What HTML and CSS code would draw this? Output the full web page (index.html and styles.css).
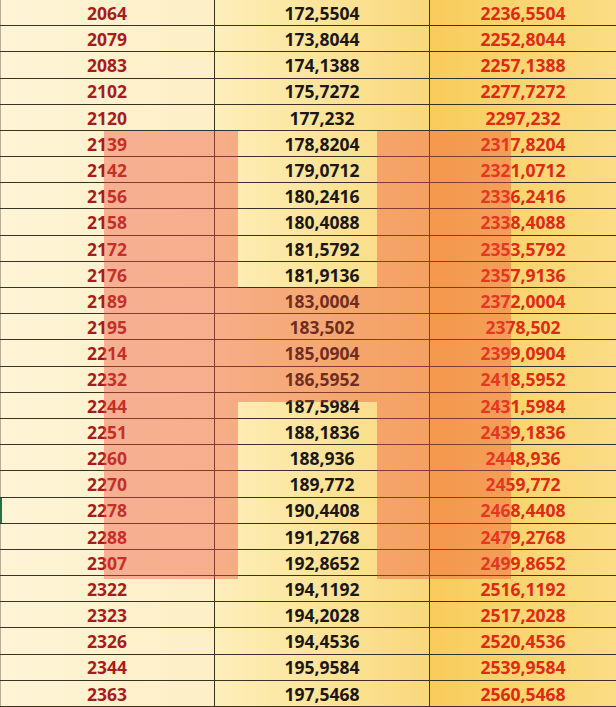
FILE: index.html
```html
<!DOCTYPE html>
<html lang="tr">
<head>
<meta charset="utf-8">
<title>Tablo</title>
<link rel="stylesheet" href="styles.css">
</head>
<body>
<div class="sheet">
  <div class="rows">
    <div class="row"><div class="c c1">2064</div><div class="c c2">172,5504</div><div class="c c3">2236,5504</div></div>
    <div class="row"><div class="c c1">2079</div><div class="c c2">173,8044</div><div class="c c3">2252,8044</div></div>
    <div class="row"><div class="c c1">2083</div><div class="c c2">174,1388</div><div class="c c3">2257,1388</div></div>
    <div class="row"><div class="c c1">2102</div><div class="c c2">175,7272</div><div class="c c3">2277,7272</div></div>
    <div class="row"><div class="c c1">2120</div><div class="c c2">177,232</div><div class="c c3">2297,232</div></div>
    <div class="row"><div class="c c1">2139</div><div class="c c2">178,8204</div><div class="c c3">2317,8204</div></div>
    <div class="row"><div class="c c1">2142</div><div class="c c2">179,0712</div><div class="c c3">2321,0712</div></div>
    <div class="row"><div class="c c1">2156</div><div class="c c2">180,2416</div><div class="c c3">2336,2416</div></div>
    <div class="row"><div class="c c1">2158</div><div class="c c2">180,4088</div><div class="c c3">2338,4088</div></div>
    <div class="row"><div class="c c1">2172</div><div class="c c2">181,5792</div><div class="c c3">2353,5792</div></div>
    <div class="row"><div class="c c1">2176</div><div class="c c2">181,9136</div><div class="c c3">2357,9136</div></div>
    <div class="row"><div class="c c1">2189</div><div class="c c2">183,0004</div><div class="c c3">2372,0004</div></div>
    <div class="row"><div class="c c1">2195</div><div class="c c2">183,502</div><div class="c c3">2378,502</div></div>
    <div class="row"><div class="c c1">2214</div><div class="c c2">185,0904</div><div class="c c3">2399,0904</div></div>
    <div class="row"><div class="c c1">2232</div><div class="c c2">186,5952</div><div class="c c3">2418,5952</div></div>
    <div class="row"><div class="c c1">2244</div><div class="c c2">187,5984</div><div class="c c3">2431,5984</div></div>
    <div class="row"><div class="c c1">2251</div><div class="c c2">188,1836</div><div class="c c3">2439,1836</div></div>
    <div class="row"><div class="c c1">2260</div><div class="c c2">188,936</div><div class="c c3">2448,936</div></div>
    <div class="row"><div class="c c1">2270</div><div class="c c2">189,772</div><div class="c c3">2459,772</div></div>
    <div class="row"><div class="c c1 selected">2278</div><div class="c c2">190,4408</div><div class="c c3">2468,4408</div></div>
    <div class="row"><div class="c c1">2288</div><div class="c c2">191,2768</div><div class="c c3">2479,2768</div></div>
    <div class="row"><div class="c c1">2307</div><div class="c c2">192,8652</div><div class="c c3">2499,8652</div></div>
    <div class="row"><div class="c c1">2322</div><div class="c c2">194,1192</div><div class="c c3">2516,1192</div></div>
    <div class="row"><div class="c c1">2323</div><div class="c c2">194,2028</div><div class="c c3">2517,2028</div></div>
    <div class="row"><div class="c c1">2326</div><div class="c c2">194,4536</div><div class="c c3">2520,4536</div></div>
    <div class="row"><div class="c c1">2344</div><div class="c c2">195,9584</div><div class="c c3">2539,9584</div></div>
    <div class="row"><div class="c c1">2363</div><div class="c c2">197,5468</div><div class="c c3">2560,5468</div></div>
  </div>
  <svg class="watermark" width="616" height="707" viewBox="0 0 616 707" aria-hidden="true">
    <path d="M104 131 H238 V288 H377 V131 H511 V579 H377 V402 H238 V579 H104 Z" fill="rgb(238,78,58)" fill-opacity="0.4"/>
  </svg>
</div>
</body>
</html>
```

FILE: styles.css
```css
html, body {
  margin: 0;
  padding: 0;
}

body {
  width: 616px;
  height: 707px;
  overflow: hidden;
  background: #fdf1cc;
  font-family: "Open Sans", "Liberation Sans", sans-serif;
}

.sheet {
  position: relative;
  width: 616px;
  height: 707px;
}

.rows {
  display: grid;
  grid-template-rows: repeat(27, 1fr);
  height: 707px;
}

.row {
  display: grid;
  grid-template-columns: 215px 215px 1fr;
  min-height: 0;
}

.c {
  display: flex;
  align-items: center;
  justify-content: center;
  padding-top: 2px;
  font-size: 17.5px;
  font-weight: 700;
  border-bottom: 1px solid #3b3226;
  box-sizing: border-box;
  line-height: 1;
}

.c1 {
  color: #a81c1c;
  background: linear-gradient(to right, #fef4d6, #fdefc6);
  border-right: 1px solid #3b3226;
  box-shadow: inset 1px 0 0 #b8ae96;
}

.c2 {
  color: #1c1712;
  background: linear-gradient(to right, #fdeebb, #fbe396 55%, #f9d87c);
  border-right: 1px solid #3b3226;
}

.c3 {
  color: #df2a14;
  background: linear-gradient(to right, #f8cb5a, #fad36c 40%, #fbdd86);
}

.c1.selected {
  box-shadow: inset 2px 0 0 #217346;
}

.watermark {
  position: absolute;
  left: 0;
  top: 0;
  pointer-events: none;
}
```
